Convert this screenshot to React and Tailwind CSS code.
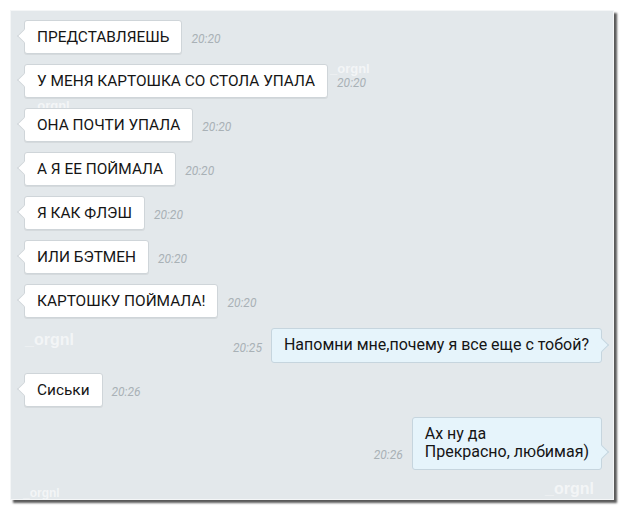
import React from "react";

const incoming = [
  { t: "ПРЕДСТАВЛЯЕШЬ", time: "20:20" },
  { t: "У МЕНЯ КАРТОШКА СО СТОЛА УПАЛА", time: "20:20" },
  { t: "ОНА ПОЧТИ УПАЛА", time: "20:20" },
  { t: "А Я ЕЕ ПОЙМАЛА", time: "20:20" },
  { t: "Я КАК ФЛЭШ", time: "20:20" },
  { t: "ИЛИ БЭТМЕН", time: "20:20" },
  { t: "КАРТОШКУ ПОЙМАЛА!", time: "20:20" },
];

function In({ text, time }) {
  return (
    <div className="flex items-end">
      <div className="relative z-10 bg-white border border-[#cfd5d9] rounded-[3px] px-[12px] py-[7px] leading-[18px] text-[15.4px] text-[#151515] shadow-[0_1px_0_rgba(0,0,0,0.06)]">
        <span className="absolute left-[-6px] bottom-[12px] w-[10px] h-[10px] bg-white border-l border-b border-[#cfd5d9] rotate-45" />
        <span className="relative">{text}</span>
      </div>
      <div className="ml-[9px] mb-[8px] text-[12px] italic text-[#a9b1b6] leading-[14px]">{time}</div>
    </div>
  );
}

function Out({ children, time }) {
  return (
    <div className="flex items-end justify-end">
      <div className="mr-[9px] mb-[8px] text-[12px] italic text-[#a9b1b6] leading-[14px]">{time}</div>
      <div className="relative z-10 bg-[#e6f4fb] border border-[#c6d5de] rounded-[3px] px-[12px] pt-[7px] pb-[8px] leading-[18px] text-[16px] text-[#151515]">
        <span className="absolute right-[-6px] bottom-[12px] w-[10px] h-[10px] bg-[#e6f4fb] border-r border-t border-[#c6d5de] rotate-45" />
        <span className="relative">{children}</span>
      </div>
    </div>
  );
}

function Mark({ className }) {
  return (
    <div
      className={"absolute font-bold text-white/60 leading-none select-none " + className}
      style={{ fontFamily: '"Liberation Sans", Arial, sans-serif' }}
    >
      _orgnl
    </div>
  );
}

export default function App() {
  return (
    <div
      className="w-[625px] h-[511px] bg-white pt-[10px] pl-[10px]"
      style={{ fontFamily: 'Roboto, "Noto Sans", sans-serif' }}
    >
      <div className="relative w-[604px] h-[490px] bg-[#e3e8eb] border border-[#f4f6f7] shadow-[3px_3px_2px_rgba(0,0,0,0.65)] overflow-hidden">
        <div className="flex flex-col gap-[10px] pt-[9px] pl-[13px] pr-[11px]">
          {incoming.map((m, i) => (
            <In key={i} text={m.t} time={m.time} />
          ))}
          <Out time="20:25">Напомни мне,почему я все еще с тобой?</Out>
          <In text="Сиськи" time="20:26" />
          <Out time="20:26">
            Ах ну да
            <br />
            Прекрасно, любимая)
          </Out>
        </div>
        <Mark className="left-[319px] top-[51px] text-[13px]" />
        <Mark className="left-[19px] top-[88px] text-[13px]" />
        <Mark className="left-[14px] top-[321px] text-[16px]" />
        <Mark className="left-[534px] top-[470px] text-[16px]" />
        <Mark className="left-[12px] top-[476px] text-[12px]" />
      </div>
    </div>
  );
}
